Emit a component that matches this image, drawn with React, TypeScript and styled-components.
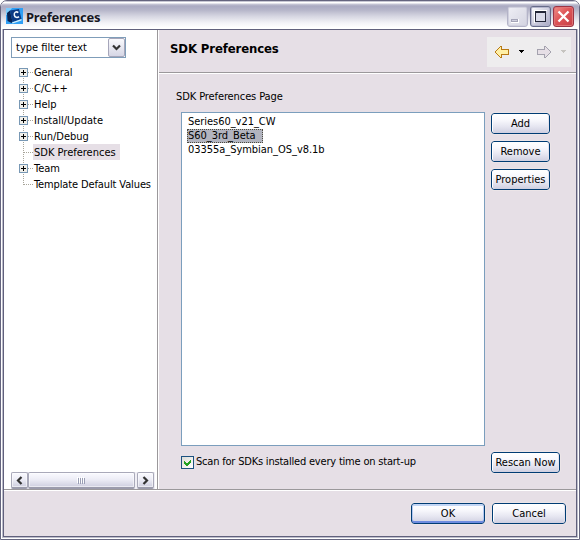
import React from 'react';
import styled, { createGlobalStyle, css } from 'styled-components';

const PANEL = '#e6dfe6';

const Global = createGlobalStyle`
  *, *::before, *::after { box-sizing: border-box; }
  html, body { margin: 0; padding: 0; background: #fff; overflow: hidden; }
  body { font-family: "DejaVu Sans Condensed", "DejaVu Sans", sans-serif; font-size: 11px; line-height: 14px; color: #000; }
  button { font: inherit; color: inherit; padding: 0; }
`;

const Window = styled.div`
  width: 580px;
  height: 540px;
  display: flex;
  flex-direction: column;
  border: 1px solid #65657f;
  border-radius: 7px 7px 0 0;
  background: #fff;
  overflow: hidden;
`;

const TitleBar = styled.header`
  height: 28px;
  flex: none;
  display: flex;
  align-items: center;
  padding: 2px 5px 0 5px;
  background: linear-gradient(#8f8fa8 0, #fff 1px, #fff 2px, #c9c9d8 3px, #aaaac2 5px, #b5b5c9 9px, #d5d5e1 15px, #f3f3f7 22px, #fff 27px);
`;

const Title = styled.h1`
  margin: 1px 0 0 3px;
  flex: 1;
  font: bold 13px/18px "Noto Sans", sans-serif;
  letter-spacing: -0.24px;
  color: #17171f;
`;

const CaptionButton = styled.button<{ $kind: 'min' | 'max' | 'close' }>`
  width: 21px;
  height: 21px;
  margin-left: 2px;
  display: flex;
  border-radius: 3px;
  border: 1px solid #666b89;
  background: linear-gradient(135deg, #fff 0, #dcdce8 35%, #a8a8c4 100%);
  box-shadow: inset 0 0 0 1px #b6b7cf;
  ${p => p.$kind === 'min' && css`
    border-color: #b4b4c8;
    background: linear-gradient(135deg, #efeff5, #d4d4e1);
    box-shadow: inset 0 0 0 1px #d0d0de;
  `}
  ${p => p.$kind === 'close' && css`
    border-color: #9d3444;
    background: linear-gradient(135deg, #f08d86, #de5558 45%, #c63f47);
    box-shadow: inset 0 0 0 1px #e07476;
  `}
  svg { display: block; }
`;

const Frame = styled.div`
  flex: 1;
  min-height: 0;
  margin: 0 1px 1px;
  border: 1px solid #bcbccb;
  border-top: 0;
  display: flex;
`;

const Client = styled.main`
  flex: 1;
  border: 1px solid #60607c;
  background: ${PANEL};
  display: flex;
  flex-direction: column;
`;

const Body = styled.div`
  flex: 1;
  min-height: 0;
  display: flex;
  border-bottom: 1px solid #9b989b;
`;

const Sidebar = styled.aside`
  width: 154px;
  flex: none;
  display: flex;
  flex-direction: column;
  padding: 7px 2px 0 7px;
  background: #fff;
  border-right: 1px solid #9b989b;
  box-shadow: 1px 0 #fff;
`;

const FilterBox = styled.div`
  width: 115px;
  height: 21px;
  flex: none;
  display: flex;
  justify-content: space-between;
  border: 1px solid #7f9db9;
  padding: 0 0 0 4px;
  line-height: 20px;
`;

const DropButton = styled.button`
  width: 17px;
  height: 19px;
  border: 1px solid #a6a6ba;
  border-radius: 2px;
  background: linear-gradient(#fafafd, #d6d6e5);
  display: flex;
  align-items: center;
  justify-content: center;
`;

const Tree = styled.ul`
  list-style: none;
  margin: 6px 0 0 8px;
  padding: 0;
  flex: 1;
`;

const TreeItem = styled.li<{ $spacing?: number }>`
  height: 16px;
  display: flex;
  align-items: center;
  white-space: nowrap;
  letter-spacing: ${p => p.$spacing ?? 0}px;
`;

const Branch = styled.svg`
  width: 14px;
  height: 16px;
  flex: none;
  display: block;
`;

const TreeLabel = styled.span<{ $active?: boolean }>`
  height: 16px;
  line-height: 17px;
  padding: 0 4px 0 1px;
  background: ${p => (p.$active ? PANEL : 'transparent')};
`;

const ScrollBar = styled.div`
  height: 17px;
  display: flex;
  background: #f0eff5;
`;

const ScrollPart = styled.button<{ $thumb?: boolean }>`
  width: ${p => (p.$thumb ? 107 : 17)}px;
  height: 17px;
  display: flex;
  align-items: center;
  justify-content: center;
  border: 1px solid #a9a9b9;
  border-bottom: 2px solid #9b9bac;
  border-radius: 2px;
  background: linear-gradient(#fafaff 0, #ededf6 45%, #cecedf 100%);
  box-shadow: inset 0 0 0 1px #fff8;
  margin-right: ${p => (p.$thumb ? 2 : 0)}px;
`;

const Page = styled.section`
  flex: 1;
  display: flex;
  flex-direction: column;
  margin-left: 1px;
`;

const PageHeader = styled.div`
  height: 43px;
  flex: none;
  display: flex;
  justify-content: space-between;
  padding: 7px 5px 0 11px;
  border-bottom: 1px solid #9b989b;
  box-shadow: 0 1px #fff;
`;

const PageTitle = styled.h2`
  margin: 4px 0 0;
  font-size: 13px;
  line-height: 16px;
  letter-spacing: -0.12px;
`;

const NavBar = styled.nav`
  width: 84px;
  height: 30px;
  background: #eeedee;
`;

const PageBody = styled.div`
  flex: 1;
  display: flex;
  flex-direction: column;
  padding: 17px 16px 0 16px;
`;

const Caption = styled.div`
  height: 22px;
  padding-left: 1px;
  letter-spacing: -0.1px;
`;

const Columns = styled.div`
  display: flex;
  align-items: flex-start;
  padding-left: 6px;
  gap: 6px;
`;

const SdkList = styled.ul`
  list-style: none;
  width: 304px;
  height: 334px;
  margin: 0;
  padding: 2px 5px;
  background: #fff;
  border: 1px solid #7b9ebd;
`;

const SdkItem = styled.li<{ $selected?: boolean }>`
  width: max-content;
  height: 14px;
  line-height: 13px;
  padding: 0 2px 0 1px;
  letter-spacing: -0.04px;
  ${p => p.$selected && css`
    width: 76px;
    line-height: 12px;
    padding-left: 0;
    background: #b2b4bf;
    border: 1px dotted #4d4b40;
  `}
`;

const ButtonColumn = styled.div`
  display: flex;
  flex-direction: column;
  gap: 7px;
  padding-top: 1px;
`;

const PushButton = styled.button<{ $w: number; $primary?: boolean }>`
  width: ${p => p.$w}px;
  height: 21px;
  flex: none;
  line-height: 19px;
  text-align: center;
  border: 1px solid #003c74;
  border-radius: 3px;
  background: linear-gradient(#fff 0, #f9f9fd 30%, #e6e6f1 65%, #cfcfe0 100%);
  outline: 1px solid #ece5e8;
  box-shadow: ${p => (p.$primary
    ? 'inset 0 2px #c3d6f5, inset 0 -2px #6e8ce0, inset 1px 0 #b4c8f0, inset -1px 0 #b4c8f0'
    : 'inset 1px 0 #fff, inset -1px 0 #e3e3ee')};
`;

const ScanRow = styled.div`
  display: flex;
  align-items: flex-start;
  margin-top: 6px;
  padding-left: 6px;
`;

const ScanLabel = styled.label`
  display: flex;
  align-items: center;
  width: 310px;
  height: 20px;
  letter-spacing: -0.2px;
`;

const CheckBox = styled.span`
  width: 13px;
  height: 13px;
  margin-right: 2px;
  border: 1px solid #1c5180;
  background: linear-gradient(135deg, #dcdcd7, #fff);
  display: flex;
`;

const Footer = styled.footer`
  height: 46px;
  flex: none;
  display: flex;
  justify-content: flex-end;
  gap: 7px;
  padding: 12px 10px 0 0;
  border-top: 1px solid #fff;
`;

const nodes = [
  { label: 'General', expandable: true, spacing: -0.1 },
  { label: 'C/C++', expandable: true },
  { label: 'Help', expandable: true },
  { label: 'Install/Update', expandable: true },
  { label: 'Run/Debug', expandable: true },
  { label: 'SDK Preferences', expandable: false, active: true },
  { label: 'Team', expandable: true },
  { label: 'Template Default Values', expandable: false, spacing: -0.12 },
];

const sdks = [
  { name: 'Series60_v21_CW' },
  { name: 'S60_3rd_Beta', selected: true },
  { name: '03355a_Symbian_OS_v8.1b' },
];

function TreeBranch({ expandable, first, last }: { expandable: boolean; first: boolean; last: boolean }) {
  return (
    <Branch viewBox="0 0 14 16" shapeRendering="crispEdges">
      <path d={`M4.5 ${first ? 8 : 0}V${last ? 9 : 16}M5 8.5H14`} fill="none" stroke="#a8a59a" strokeDasharray="1 1" />
      {expandable && (
        <>
          <rect x=".5" y="4.5" width="8" height="8" fill="#f0efea" stroke="#7898b5" />
          <path d="M2 8.5h5M4.5 6v5" stroke="#000" />
        </>
      )}
    </Branch>
  );
}

const AppLogo = () => (
  <svg width="17" height="16" viewBox="0 0 17 16">
    <rect width="17" height="16" fill="#2f9ff5" />
    <path d="M0 0h6L1 7H0z" fill="#7cccfd" />
    <path d="M4 2.500l9-1.500 2.500 10-9 3z" fill="#0b3a84" />
    <path d="M1 5l3-2.500 2.500 11.500-1 1-4-2z" fill="#082456" />
    <path d="M6 14.500l9.500-3.500v1.500l-9 3z" fill="#d6effc" />
    <path d="M12.300 4.600C10.500 3 7.800 4.300 8.300 7c.5 2.600 3 3 4.700 1.600" fill="none" stroke="#f0f8ff" strokeWidth="1.500" />
  </svg>
);

const NavArrows = () => (
  <svg width="84" height="30" viewBox="0 0 84 30" shapeRendering="crispEdges">
    <path d="M8.500 14.500l5-5h1v3h7v5h-7v3h-1l-5-5z" fill="#fff0a6" stroke="#b87a14" />
    <path d="M32 13h5v1h-1v1h-1v1h-1v-1h-1v-1h-1z" fill="#000" />
    <path d="M63.500 14.500l-5-5h-1v3h-7v5h7v3h1l5-5z" fill="#e6dfe6" stroke="#a4a2ae" />
    <path d="M74 13h5v1h-1v1h-1v1h-1v-1h-1v-1h-1z" fill="#c6c4c0" />
  </svg>
);

export default function App() {
  return (
    <>
      <Global />
      <Window>
        <TitleBar>
          <AppLogo />
          <Title>Preferences</Title>
          <CaptionButton $kind="min" aria-label="Minimize">
            <svg width="19" height="19" shapeRendering="crispEdges"><path d="M3 12h8v4H3z" fill="#fff" /><path d="M3 12h7v3H3z" fill="#a5a5b8" /><path d="M4 13h5v1H4z" fill="#d0d0de" /></svg>
          </CaptionButton>
          <CaptionButton $kind="max" aria-label="Maximize">
            <svg width="19" height="19" shapeRendering="crispEdges"><path d="M4.500 5.500h10v9h-10z" fill="#d9dae8" stroke="#222536" /><path d="M4 5h11" stroke="#222536" strokeWidth="2" /><path d="M3.500 16V3.500H16" fill="none" stroke="#fff" /></svg>
          </CaptionButton>
          <CaptionButton $kind="close" aria-label="Close">
            <svg width="19" height="19"><path d="M4.500 4.500l10 10m0-10l-10 10" stroke="#fff" strokeWidth="2.300" /></svg>
          </CaptionButton>
        </TitleBar>
        <Frame>
          <Client>
            <Body>
              <Sidebar>
                <FilterBox>
                  <span>type filter text</span>
                  <DropButton aria-label="Show filters">
                    <svg width="9" height="7"><path d="M1 1.500l3.500 3.500L8 1.500" fill="none" stroke="#333" strokeWidth="2.200" /></svg>
                  </DropButton>
                </FilterBox>
                <Tree>
                  {nodes.map((n, i) => (
                    <TreeItem key={n.label} $spacing={n.spacing}>
                      <TreeBranch expandable={n.expandable} first={i === 0} last={i === nodes.length - 1} />
                      <TreeLabel $active={n.active}>{n.label}</TreeLabel>
                    </TreeItem>
                  ))}
                </Tree>
                <ScrollBar>
                  <ScrollPart aria-label="Scroll left">
                    <svg width="7" height="9"><path d="M5.500 1L2 4.500 5.500 8" fill="none" stroke="#333" strokeWidth="2.200" /></svg>
                  </ScrollPart>
                  <ScrollPart $thumb aria-label="Scroll">
                    <svg width="9" height="7" shapeRendering="crispEdges"><path d="M.5 0v6M2.500 0v6M4.500 0v6M6.500 0v6" stroke="#fff" /><path d="M1.500 1v6M3.500 1v6M5.500 1v6M7.500 1v6" stroke="#9a9eb4" /></svg>
                  </ScrollPart>
                  <ScrollPart aria-label="Scroll right">
                    <svg width="7" height="9"><path d="M1.500 1L5 4.500 1.500 8" fill="none" stroke="#333" strokeWidth="2.200" /></svg>
                  </ScrollPart>
                </ScrollBar>
              </Sidebar>
              <Page>
                <PageHeader>
                  <PageTitle>SDK Preferences</PageTitle>
                  <NavBar><NavArrows /></NavBar>
                </PageHeader>
                <PageBody>
                  <Caption>SDK Preferences Page</Caption>
                  <Columns>
                    <SdkList>
                      {sdks.map(s => <SdkItem key={s.name} $selected={s.selected}>{s.name}</SdkItem>)}
                    </SdkList>
                    <ButtonColumn>
                      <PushButton $w={59}>Add</PushButton>
                      <PushButton $w={59}>Remove</PushButton>
                      <PushButton $w={59}>Properties</PushButton>
                    </ButtonColumn>
                  </Columns>
                  <ScanRow>
                    <ScanLabel>
                      <CheckBox>
                        <svg width="11" height="11" shapeRendering="crispEdges"><path d="M2 4v3l2 2h1l4-4V2L5 6H4L2 4z" fill="#21a121" /></svg>
                      </CheckBox>
                      Scan for SDKs installed every time on start-up
                    </ScanLabel>
                    <PushButton $w={69}>Rescan Now</PushButton>
                  </ScanRow>
                </PageBody>
              </Page>
            </Body>
            <Footer>
              <PushButton $w={74} $primary>OK</PushButton>
              <PushButton $w={74}>Cancel</PushButton>
            </Footer>
          </Client>
        </Frame>
      </Window>
    </>
  );
}
